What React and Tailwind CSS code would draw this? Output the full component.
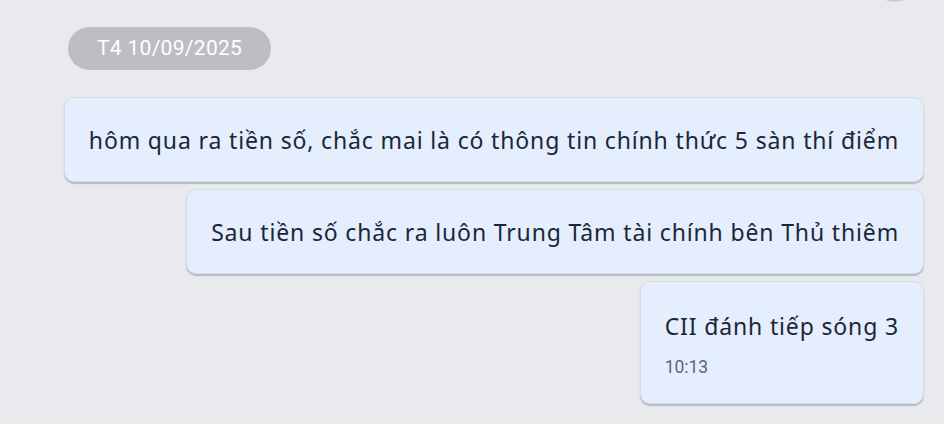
const messages = [
  {
    id: 1,
    text: "hôm qua ra tiền số, chắc mai là có thông tin chính thức 5 sàn thí điểm",
  },
  {
    id: 2,
    text: "Sau tiền số chắc ra luôn Trung Tâm tài chính bên Thủ thiêm",
  },
  {
    id: 3,
    text: "CII đánh tiếp sóng 3",
    time: "10:13",
  },
];

export default function App() {
  return (
    <main className="relative h-[424px] w-[944px] overflow-hidden bg-[#e9eaee] font-['Noto_Sans',sans-serif]">
      <div className="absolute left-[881px] top-[-20px] h-5 w-7 rounded-full bg-[#e9eaee] shadow-[0_1px_2px_rgba(0,0,0,0.2)]" />

      <div className="flex flex-col px-5 pt-[27px]">
        <div className="ml-12 w-fit rounded-full bg-[#bdbec2] px-[29px] py-[8px] font-['Roboto',sans-serif] text-[21px] leading-[27px] tracking-[0.3px] text-white">
          T4 10/09/2025
        </div>

        <div className="mt-[27px] flex flex-col items-end gap-[7px]">
          {messages.map((msg) => (
            <div
              key={msg.id}
              className={`rounded-[10px] border border-[#d6dde8] bg-[#e4eefd] px-6 text-[23px] tracking-[0.85px] text-[#1b2638] shadow-[0_1.5px_1px_rgba(90,100,120,0.35)] ${
                msg.time ? "pb-[24px] pt-[28px]" : "pb-[24px] pt-[26px]"
              }`}
            >
              <p className="leading-[33px]">{msg.text}</p>
              {msg.time && (
                <p className="mt-[12px] font-['Roboto',sans-serif] text-[17.5px] leading-[24px] tracking-normal text-[#5c6778]">
                  {msg.time}
                </p>
              )}
            </div>
          ))}
        </div>
      </div>
    </main>
  );
}
